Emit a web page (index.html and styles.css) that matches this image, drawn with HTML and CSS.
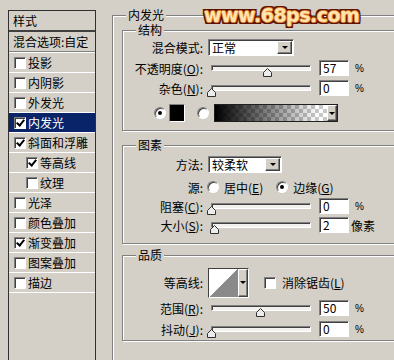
FILE: index.html
```html
<!DOCTYPE html>
<html lang="zh-CN">
<head>
    <meta charset="UTF-8">
    <meta name="viewport" content="width=device-width, initial-scale=1.0">
    <title>图层样式 - 内发光</title>
    <link rel="stylesheet" href="styles.css">
</head>
<body>
    <div class="dialog">
        <div class="style-list">
            <div class="list-head">样式</div>
            <div class="list-blend">混合选项:自定</div>
            <div class="list-item"><span class="check"></span>投影</div>
            <div class="list-item"><span class="check"></span>内阴影</div>
            <div class="list-item"><span class="check"></span>外发光</div>
            <div class="list-item selected"><span class="check on"></span>内发光</div>
            <div class="list-item"><span class="check on"></span>斜面和浮雕</div>
            <div class="list-item sub"><span class="check on"></span>等高线</div>
            <div class="list-item sub"><span class="check"></span>纹理</div>
            <div class="list-item"><span class="check"></span>光泽</div>
            <div class="list-item"><span class="check"></span>颜色叠加</div>
            <div class="list-item"><span class="check on"></span>渐变叠加</div>
            <div class="list-item"><span class="check"></span>图案叠加</div>
            <div class="list-item"><span class="check"></span>描边</div>
        </div>

        <div class="panel">
            <div class="group group-outer">
                <span class="group-title">内发光</span>

                <!-- 结构 -->
                <div class="group group-structure">
                    <span class="group-title">结构</span>
                    <div class="row">
                        <span class="label">混合模式:</span>
                        <div class="select select-blend"><span>正常</span><span class="drop"></span></div>
                    </div>
                    <div class="row mt-1">
                        <span class="label">不透明度(<u>O</u>):</span>
                        <div class="slider"><span class="thumb" style="left:57%"><svg width="9" height="9" viewBox="0 0 9 9"><path d="M4.5 0.5 L8.5 4.5 V8.5 H0.5 V4.5 Z" fill="#ececec" stroke="#303030"/></svg></span></div>
                        <div class="field">57</div><span class="unit">%</span>
                    </div>
                    <div class="row">
                        <span class="label">杂色(<u>N</u>):</span>
                        <div class="slider"><span class="thumb" style="left:0%"><svg width="9" height="9" viewBox="0 0 9 9"><path d="M4.5 0.5 L8.5 4.5 V8.5 H0.5 V4.5 Z" fill="#ececec" stroke="#303030"/></svg></span></div>
                        <div class="field">0</div><span class="unit">%</span>
                    </div>
                    <div class="row row-fill mt-6">
                        <span class="radio on"></span>
                        <span class="swatch"></span>
                        <span class="radio radio-gap"></span>
                        <div class="gradient"><span class="drop drop-tall"></span></div>
                    </div>
                </div>

                <!-- 图素 -->
                <div class="group group-elements">
                    <span class="group-title">图素</span>
                    <div class="row">
                        <span class="label">方法:</span>
                        <div class="select select-method"><span>较柔软</span><span class="drop"></span></div>
                    </div>
                    <div class="row mt-3">
                        <span class="label">源:</span>
                        <span class="radio radio-first"></span>
                        <span class="radio-text">居中(<u>E</u>)</span>
                        <span class="radio on radio-second"></span>
                        <span class="radio-text">边缘(<u>G</u>)</span>
                    </div>
                    <div class="row h-18">
                        <span class="label">阻塞(<u>C</u>):</span>
                        <div class="slider"><span class="thumb" style="left:0%"><svg width="9" height="9" viewBox="0 0 9 9"><path d="M4.5 0.5 L8.5 4.5 V8.5 H0.5 V4.5 Z" fill="#ececec" stroke="#303030"/></svg></span></div>
                        <div class="field">0</div><span class="unit">%</span>
                    </div>
                    <div class="row">
                        <span class="label">大小(<u>S</u>):</span>
                        <div class="slider"><span class="thumb" style="left:3%"><svg width="9" height="9" viewBox="0 0 9 9"><path d="M4.5 0.5 L8.5 4.5 V8.5 H0.5 V4.5 Z" fill="#ececec" stroke="#303030"/></svg></span></div>
                        <div class="field">2</div><span class="unit unit-text">像素</span>
                    </div>
                </div>

                <!-- 品质 -->
                <div class="group group-quality">
                    <span class="group-title">品质</span>
                    <div class="row row-contour">
                        <span class="label">等高线:</span>
                        <div class="contour"><span class="contour-img"></span><span class="drop drop-tall"></span></div>
                        <span class="check check-aa"></span>
                        <span class="radio-text">消除锯齿(<u>L</u>)</span>
                    </div>
                    <div class="row">
                        <span class="label">范围(<u>R</u>):</span>
                        <div class="slider"><span class="thumb" style="left:50%"><svg width="9" height="9" viewBox="0 0 9 9"><path d="M4.5 0.5 L8.5 4.5 V8.5 H0.5 V4.5 Z" fill="#ececec" stroke="#303030"/></svg></span></div>
                        <div class="field">50</div><span class="unit">%</span>
                    </div>
                    <div class="row mt-1">
                        <span class="label">抖动(<u>J</u>):</span>
                        <div class="slider"><span class="thumb" style="left:0%"><svg width="9" height="9" viewBox="0 0 9 9"><path d="M4.5 0.5 L8.5 4.5 V8.5 H0.5 V4.5 Z" fill="#ececec" stroke="#303030"/></svg></span></div>
                        <div class="field">0</div><span class="unit">%</span>
                    </div>
                </div>
            </div>
        </div>

        <div class="watermark">www.68ps.com</div>
    </div>
</body>
</html>
```

FILE: styles.css
```css
* {
    box-sizing: border-box;
}

body {
    margin: 0;
    background: #d4d0c8;
    font-family: "Noto Sans CJK SC", "Noto Sans", sans-serif;
    font-size: 12px;
    color: #000;
    overflow: hidden;
}

u {
    text-decoration: underline;
}

.dialog {
    position: relative;
    display: flex;
    width: 394px;
    height: 360px;
    padding: 10px 0 0 8px;
    overflow: hidden;
}

/* left style list */
.style-list {
    flex: none;
    width: 88px;
    height: 380px;
    border: 1px solid #303030;
}

.list-head {
    height: 21px;
    padding-left: 4px;
    line-height: 19px;
    border-bottom: 2px solid #404040;
}

.list-blend {
    height: 21px;
    padding-left: 4px;
    line-height: 19px;
    border-bottom: 1px solid #fff;
    box-shadow: inset 0 -1px 0 #808080;
}

.list-item {
    display: flex;
    align-items: center;
    height: 20px;
    padding-left: 5px;
    border-bottom: 1px solid #fff;
    white-space: nowrap;
}

.list-item.sub {
    padding-left: 17px;
}

.list-item.selected {
    background: #0a246a;
    color: #fff;
}

.check {
    position: relative;
    flex: none;
    width: 12px;
    height: 12px;
    margin-right: 2px;
    background: #fff;
    border: 1px solid;
    border-color: #808080 #fff #fff #808080;
    box-shadow: inset 1px 1px 0 #404040;
}

.check.on::after {
    content: "";
    position: absolute;
    left: 3px;
    top: 0;
    width: 3px;
    height: 6px;
    border: solid #000;
    border-width: 0 2px 2px 0;
    transform: rotate(40deg);
}

/* right panel */
.panel {
    flex: none;
    width: 300px;
    margin-left: 16px;
}

.group {
    position: relative;
    border: 1px solid #808080;
    box-shadow: inset 1px 1px 0 #fff, 1px 1px 0 #fff;
}

.group-title {
    position: absolute;
    top: -7px;
    left: 13px;
    padding: 0 2px;
    line-height: 12px;
    background: #d4d0c8;
}

.group-outer {
    height: 400px;
    margin-top: 5px;
    padding: 14px 0 0 9px;
}

.group-structure,
.group-elements,
.group-quality {
    width: 290px;
}

.group-structure {
    height: 101px;
    padding-top: 6px;
}

.group-elements {
    height: 99px;
    margin-top: 14px;
    padding-top: 8px;
}

.group-quality {
    height: 86px;
    margin-top: 11px;
    padding-top: 11px;
}

.row {
    display: flex;
    align-items: center;
    height: 20px;
    white-space: nowrap;
}

.mt-1 { margin-top: 1px; }
.mt-3 { margin-top: 3px; }
.mt-6 { margin-top: 6px; }
.h-18 { height: 18px; }

.label {
    flex: none;
    width: 80px;
    text-align: right;
}

/* dropdowns */
.select {
    display: flex;
    align-items: center;
    justify-content: space-between;
    height: 17px;
    margin-left: 5px;
    padding: 0 1px 0 3px;
    background: #fff;
    border: 1px solid;
    border-color: #808080 #fff #fff #808080;
    box-shadow: inset 1px 1px 0 #404040;
}

.select-blend {
    width: 86px;
}

.select-method {
    width: 74px;
}

.drop {
    display: flex;
    align-items: center;
    justify-content: center;
    flex: none;
    width: 15px;
    height: 13px;
    background: #d4d0c8;
    border: 1px solid;
    border-color: #fff #404040 #404040 #fff;
    box-shadow: inset -1px -1px 0 #808080;
}

.drop::before {
    content: "";
    border: solid transparent;
    border-width: 3px 3px 0;
    border-top-color: #000;
}

.drop-tall {
    width: 10px;
    height: 100%;
}

/* sliders */
.slider {
    position: relative;
    flex: none;
    width: 100px;
    height: 6px;
    margin-left: 8px;
    background: #f2f1ee;
    border: 1px solid;
    border-color: #808080 #fff #fff #808080;
    box-shadow: inset 1px 1px 0 #404040;
}

.thumb {
    position: absolute;
    top: 2px;
    width: 9px;
    height: 9px;
    margin-left: -5px;
}

.thumb svg {
    display: block;
}

.field {
    flex: none;
    width: 30px;
    height: 16px;
    margin-left: 8px;
    padding-left: 3px;
    line-height: 14px;
    background: #fff;
    border: 1px solid;
    border-color: #808080 #fff #fff #808080;
    box-shadow: inset 1px 1px 0 #404040;
}

.unit {
    margin-left: 6px;
    font-family: "Liberation Sans", sans-serif;
    font-size: 10px;
}

.unit.unit-text {
    margin-left: 2px;
    font-family: "Noto Sans CJK SC", sans-serif;
    font-size: 12px;
}

/* radios, colour and gradient */
.radio {
    display: flex;
    align-items: center;
    justify-content: center;
    flex: none;
    width: 12px;
    height: 12px;
    border-radius: 50%;
    background: #fff;
    border: 1px solid;
    border-color: #808080 #fff #fff #808080;
    box-shadow: inset 1px 1px 0 #404040;
}

.radio.on::after {
    content: "";
    width: 4px;
    height: 4px;
    border-radius: 50%;
    background: #000;
}

.row-fill {
    height: 18px;
    padding-left: 31px;
}

.swatch {
    flex: none;
    width: 16px;
    height: 18px;
    margin-left: 3px;
    background: #000;
    border: 1px solid;
    border-color: #808080 #fff #fff #808080;
}

.radio-gap {
    margin-left: 12px;
}

.gradient {
    display: flex;
    justify-content: flex-end;
    flex: none;
    width: 124px;
    height: 18px;
    margin-left: 5px;
    border: 1px solid #202020;
    background:
        linear-gradient(to right, #000, rgba(0, 0, 0, 0) 85%),
        repeating-conic-gradient(#fff 0 25%, #c8c8c8 0 50%) 0 0 / 8px 8px;
}

.radio-first {
    margin-left: 4px;
}

.radio-text {
    margin-left: 5px;
}

.radio-second {
    margin-left: 13px;
}

/* contour */
.row-contour {
    height: 31px;
}

.contour {
    display: flex;
    flex: none;
    width: 41px;
    height: 30px;
    margin-left: 5px;
    border: 1px solid;
    border-color: #404040 #fff #fff #404040;
}

.contour-img {
    flex: 1;
    background: linear-gradient(to top left, #8a8a8a 50%, #fff 50%);
}

.check-aa {
    margin: 0 1px 0 15px;
}

/* watermark */
.watermark {
    position: absolute;
    left: 204px;
    top: 4px;
    font-family: "DejaVu Sans", sans-serif;
    font-weight: bold;
    font-size: 19px;
    letter-spacing: -0.5px;
    color: #ffe4ad;
    text-shadow:
        1px 0 0 #e07a2a, -1px 0 0 #e07a2a, 0 1px 0 #e07a2a, 0 -1px 0 #e07a2a,
        2px 0 0 #5a1300, -2px 0 0 #5a1300, 0 2px 0 #5a1300, 0 -2px 0 #5a1300,
        2px 2px 0 #5a1300, -2px -2px 0 #5a1300, 2px -2px 0 #5a1300, -2px 2px 0 #5a1300;
}
```
